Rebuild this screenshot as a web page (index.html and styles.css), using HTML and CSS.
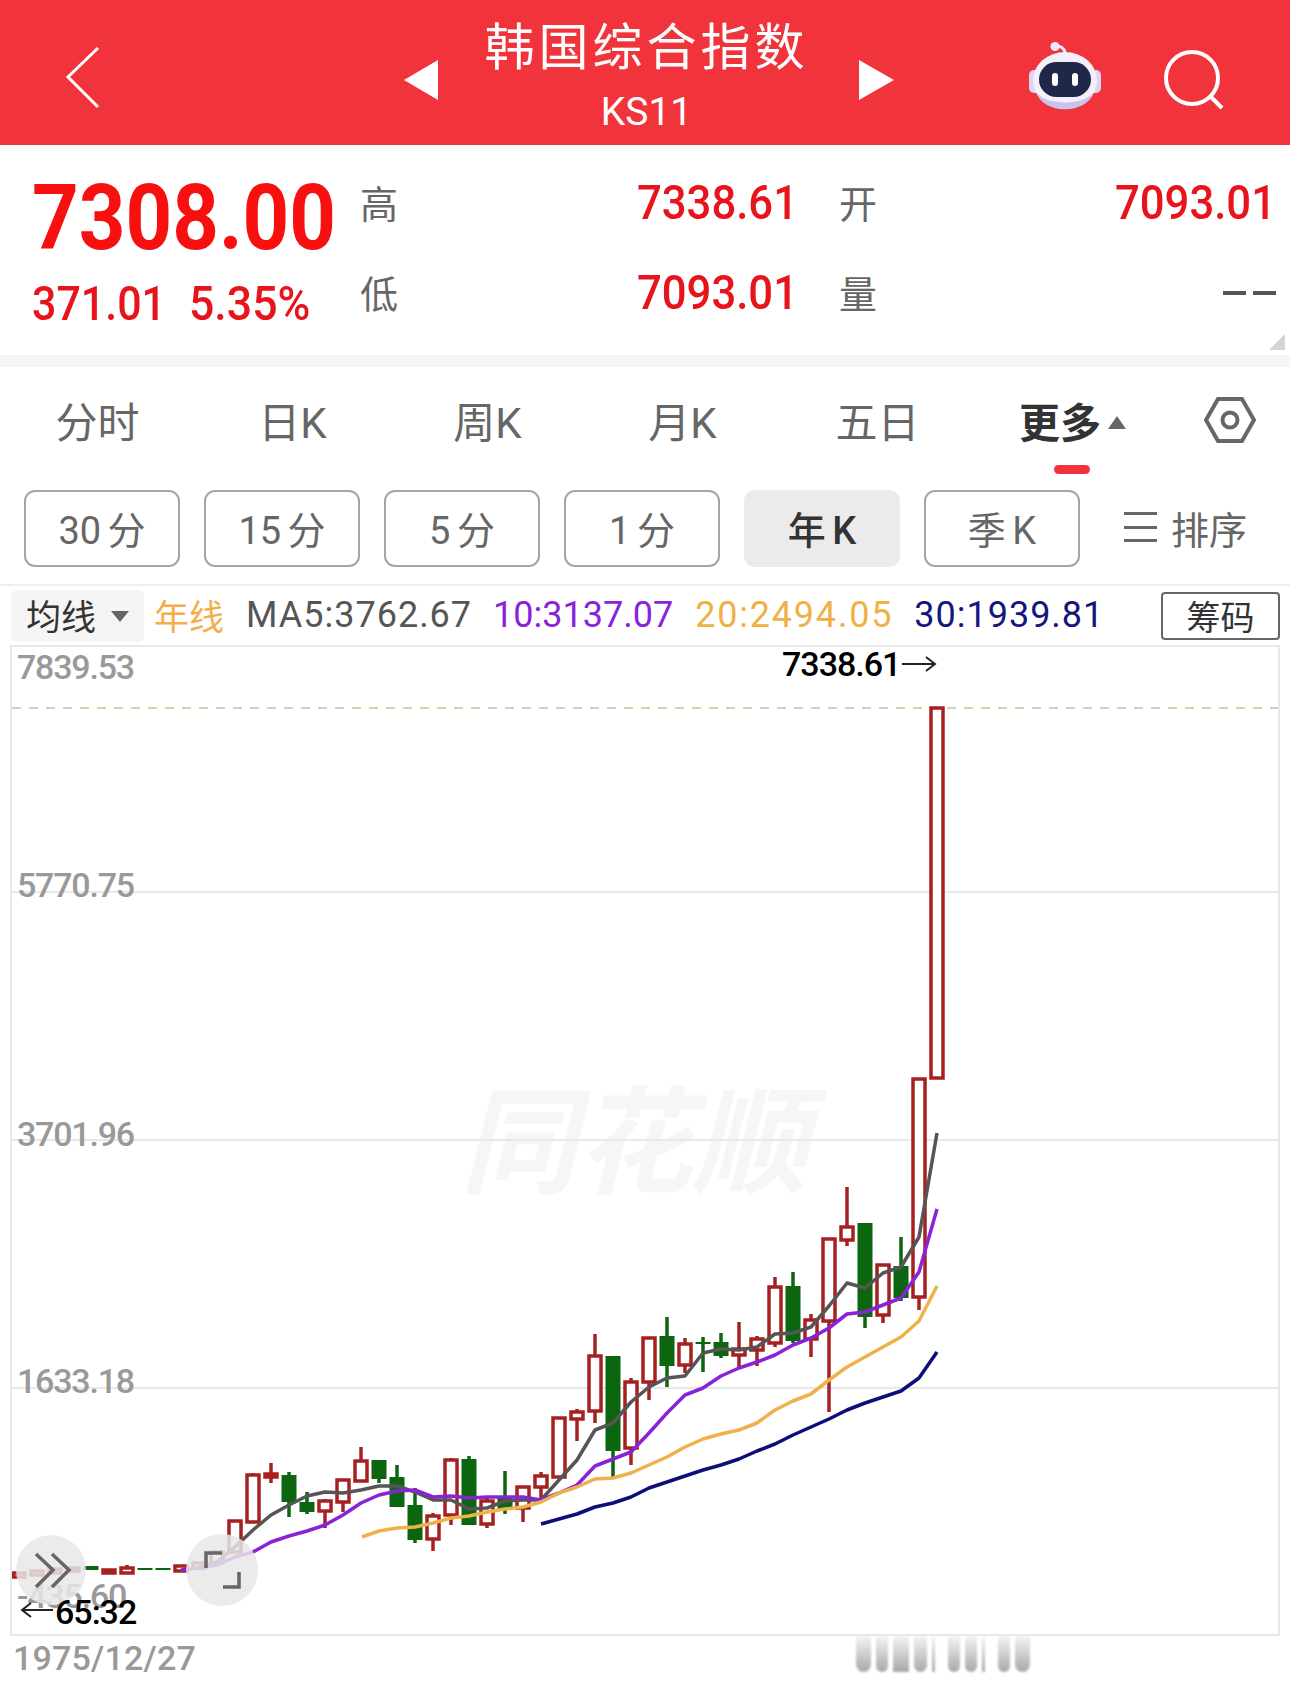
FILE: index.html
```html
<!DOCTYPE html>
<html lang="zh-CN">
<head>
    <meta charset="UTF-8">
    <meta name="viewport" content="width=device-width, initial-scale=1.0">
    <title>韩国综合指数</title>
    <link rel="stylesheet" href="styles.css">
</head>
<body>
    <header class="topbar">
        <div class="topbar-left">
            <svg class="back" width="36" height="64" viewBox="0 0 36 64"><polyline points="33,2 3,31 33,61"/></svg>
        </div>
        <div class="topbar-center">
            <span class="tri tri-left"></span>
            <div class="title">
                <div class="name">韩国综合指数</div>
                <div class="code">KS11</div>
            </div>
            <span class="tri tri-right"></span>
        </div>
        <div class="topbar-right">
            <svg class="robot" width="74" height="68" viewBox="0 0 74 68">
                <path class="antenna" d="M27 4.5c5-1 9 1 10 6"/>
                <circle cx="27" cy="4.5" r="4.5" fill="#eeeaf8"/>
                <rect x="1" y="28" width="12" height="23" rx="5" fill="#d9d5f2"/>
                <rect x="61" y="28" width="12" height="23" rx="5" fill="#d9d5f2"/>
                <ellipse cx="37" cy="38.5" rx="32" ry="28.5" fill="#f3f0fb"/>
                <path d="M8 50c7 23 51 23 58 0c-10 14-48 14-58 0z" fill="#c9c3ee"/>
                <rect x="11" y="20" width="52" height="35" rx="17.5" fill="#1f2848"/>
                <rect x="24" y="31" width="6" height="13" rx="3" fill="#fff"/>
                <rect x="44" y="31" width="6" height="13" rx="3" fill="#fff"/>
            </svg>
            <svg class="search" width="64" height="64" viewBox="0 0 64 64"><circle cx="30" cy="29" r="26"/><line x1="49" y1="48" x2="60" y2="59"/></svg>
        </div>
    </header>

    <section class="quote">
        <div class="price-block">
            <div class="price"><span class="squeeze">7308.00</span></div>
            <div class="change"><span class="squeeze">371.01</span><span class="squeeze change-pct">5.35%</span></div>
        </div>
        <div class="stat-grid">
            <span class="stat-label">高</span>
            <span class="stat-value"><span class="squeeze-r">7338.61</span></span>
            <span class="stat-label stat-label-b">开</span>
            <span class="stat-value"><span class="squeeze-r">7093.01</span></span>
            <span class="stat-label">低</span>
            <span class="stat-value"><span class="squeeze-r">7093.01</span></span>
            <span class="stat-label stat-label-b">量</span>
            <span class="stat-value stat-empty"><i></i><i></i></span>
        </div>
    </section>

    <nav class="tabs">
        <span class="tab">分时</span>
        <span class="tab">日K</span>
        <span class="tab">周K</span>
        <span class="tab">月K</span>
        <span class="tab">五日</span>
        <span class="tab tab-active">更多<i class="caret"></i></span>
        <span class="tab-settings">
            <svg width="52" height="48" viewBox="0 0 52 48"><polygon points="14,3 38,3 50,24 38,45 14,45 2,24"/><circle cx="26" cy="24" r="7.5"/></svg>
        </span>
    </nav>

    <div class="periods">
        <span class="period">30 分</span>
        <span class="period">15 分</span>
        <span class="period">5 分</span>
        <span class="period">1 分</span>
        <span class="period period-active">年 K</span>
        <span class="period">季 K</span>
        <span class="sort"><i class="sort-icon"></i>排序</span>
    </div>

    <div class="ma-row">
        <span class="ma-select">均线<i class="ma-caret"></i></span>
        <span class="ma-year">年线</span>
        <span class="ma ma5">MA5:3762.67</span>
        <span class="ma ma10">10:3137.07</span>
        <span class="ma ma20">20:2494.05</span>
        <span class="ma ma30">30:1939.81</span>
        <span class="chip-btn">筹码</span>
    </div>

    <div class="chart">
        <svg id="kline" viewBox="12 647 1266 987" width="1266" height="987"></svg>
    </div>

    <footer class="date-row">
        <span class="date">1975/12/27</span>
        <div class="blur-bars">
            <i class="bar w15"></i><i class="bar w12"></i><i class="bar w16 flat"></i><i class="bar w13"></i><i class="bar thin"></i>
            <i class="bar w12 gap-l"></i><i class="bar w12"></i><i class="bar thin"></i><i class="bar w12 gap-l"></i><i class="bar w15"></i>
        </div>
    </footer>

    <script src="chart.js"></script>
</body>
</html>
```

FILE: styles.css
```css
* {
    box-sizing: border-box;
}
body {
    margin: 0;
    width: 1290px;
    height: 1683px;
    overflow: hidden;
    background: #fff;
    font-family: Roboto, "Noto Sans CJK SC", sans-serif;
}
i {
    font-style: normal;
}

/* top bar */
.topbar {
    height: 145px;
    background: #f1333c;
    display: grid;
    grid-template-columns: 1fr auto 1fr;
    align-items: center;
    color: #fff;
}
.topbar-left {
    padding: 14px 0 0 65px;
}
.back polyline {
    fill: none;
    stroke: #fff;
    stroke-width: 3;
}
.topbar-center {
    display: flex;
    align-items: center;
    padding-left: 7px;
}
.tri {
    width: 0;
    height: 0;
    border-top: 20px solid transparent;
    border-bottom: 20px solid transparent;
    margin-top: 14px;
}
.tri-left {
    border-right: 34px solid #fff;
    margin-right: 47px;
}
.tri-right {
    border-left: 35px solid #fff;
    margin-left: 50px;
}
.title {
    text-align: center;
}
.name {
    font-size: 50px;
    line-height: 62px;
    letter-spacing: 4px;
    margin-top: 7px;
}
.code {
    font-size: 39px;
    line-height: 46px;
    margin-top: 10px;
}
.topbar-right {
    display: flex;
    justify-content: flex-end;
    align-items: center;
    padding: 12px 64px 0 0;
    gap: 60px;
}
.robot {
    margin-top: -5px;
}
.antenna {
    fill: none;
    stroke: #eeeaf8;
    stroke-width: 3;
}
.search {
    margin-top: 4px;
}
.search circle,
.search line {
    fill: none;
    stroke: #fff;
    stroke-width: 4;
}

/* quote */
.quote {
    position: relative;
    height: 222px;
    border-bottom: 12px solid #f5f5f5;
    display: flex;
}
.quote::after {
    content: "";
    position: absolute;
    right: 5px;
    bottom: 5px;
    width: 16px;
    height: 16px;
    background: #d4d4d4;
    clip-path: polygon(100% 0, 100% 100%, 0 100%);
}
.price-block {
    width: 360px;
    padding-left: 32px;
    color: #f80f0f;
}
.price {
    font-size: 90px;
    font-weight: 700;
    line-height: 92px;
    margin-top: 28px;
    white-space: nowrap;
}
.squeeze {
    display: inline-block;
    transform: scaleX(.905);
    transform-origin: left center;
}
.squeeze-r {
    display: inline-block;
    transform: scaleX(.91);
    transform-origin: right center;
}
.change {
    font-size: 48px;
    font-weight: 500;
    line-height: 54px;
    margin-top: 12px;
    white-space: nowrap;
    color: #e8141c;
}
.change .squeeze {
    width: 157px;
    transform: scaleX(.895);
}
.change .change-pct {
    width: auto;
    transform: scaleX(.93);
}
.stat-grid {
    flex: 1;
    display: grid;
    grid-template-columns: 40px 398px 41px 40px 397px;
    grid-template-rows: 90px 90px;
    padding-top: 11px;
    align-items: center;
}
.stat-label {
    font-size: 38px;
    color: #666;
}
.stat-label-b {
    grid-column: 4;
}
.stat-value {
    font-size: 48px;
    font-weight: 500;
    color: #e8141c;
    text-align: right;
    padding-top: 3px;
}
.stat-empty {
    display: flex;
    justify-content: flex-end;
    gap: 7px;
    padding-top: 0;
    margin-top: 3px;
}
.stat-empty i {
    width: 23px;
    height: 4px;
    background: #555;
}

/* tabs */
.tabs {
    height: 105px;
    display: flex;
    align-items: center;
}
.tab {
    flex: none;
    width: 195px;
    text-align: center;
    font-size: 42px;
    color: #666;
    position: relative;
}
.tab-active {
    color: #333;
    font-size: 41px;
    font-weight: 700;
}
.tab-active::after {
    content: "";
    position: absolute;
    left: 79px;
    top: 75px;
    width: 36px;
    height: 9px;
    border-radius: 5px;
    background: #f2333d;
}
.caret {
    display: inline-block;
    width: 0;
    height: 0;
    margin-left: 7px;
    vertical-align: 9px;
    border-left: 9px solid transparent;
    border-right: 9px solid transparent;
    border-bottom: 13px solid #666;
}
.tab-settings {
    flex: none;
    padding-left: 34px;
    display: flex;
}
.tab-settings polygon,
.tab-settings circle {
    fill: none;
    stroke: #666;
    stroke-width: 4;
}

/* period buttons */
.periods {
    height: 112px;
    display: flex;
    gap: 24px;
    padding: 18px 0 0 24px;
    align-items: flex-start;
}
.period {
    width: 156px;
    height: 77px;
    border: 2px solid #a5a5a5;
    border-radius: 11px;
    display: flex;
    align-items: center;
    justify-content: center;
    font-size: 38px;
    color: #666;
    word-spacing: -3px;
    padding-bottom: 3px;
}
.period-active {
    background: #ebebeb;
    border-color: #ebebeb;
    color: #333;
    font-weight: 500;
}
.sort {
    display: flex;
    align-items: center;
    height: 77px;
    font-size: 38px;
    color: #666;
    margin-left: 20px;
    padding-bottom: 3px;
}
.sort-icon {
    width: 33px;
    height: 30px;
    margin-right: 14px;
    border-top: 3px solid #666;
    border-bottom: 3px solid #666;
    background: linear-gradient(#666, #666) center / 100% 3px no-repeat;
}

/* moving average row */
.ma-row {
    height: 61px;
    border-top: 2px solid #eee;
    display: flex;
    align-items: center;
    font-size: 36px;
    white-space: nowrap;
    padding-left: 11px;
}
.ma-select {
    width: 133px;
    height: 52px;
    background: #f5f5f5;
    border-radius: 6px;
    display: flex;
    align-items: center;
    padding-left: 15px;
    padding-bottom: 3px;
    color: #333;
    font-size: 35px;
}
.ma-caret {
    width: 0;
    height: 0;
    margin-left: 15px;
    margin-top: 4px;
    border-left: 9px solid transparent;
    border-right: 9px solid transparent;
    border-top: 11px solid #666;
}
.ma-year {
    color: #f5ad4a;
    margin-left: 10px;
    font-size: 35px;
    padding-bottom: 3px;
}
.ma {
    padding-bottom: 1px;
}
.ma5 {
    color: #555;
    letter-spacing: 1px;
    margin-left: 22px;
}
.ma10 {
    color: #8a22d8;
    margin-left: 21px;
}
.ma20 {
    color: #efb143;
    letter-spacing: 1.8px;
    margin-left: 22px;
}
.ma30 {
    color: #15157e;
    letter-spacing: 1px;
    margin-left: 21px;
}
.chip-btn {
    margin-left: auto;
    margin-right: 10px;
    width: 119px;
    height: 48px;
    border: 2px solid #666;
    border-radius: 4px;
    display: flex;
    align-items: center;
    justify-content: center;
    color: #333;
    background: #fff;
    font-size: 34px;
}

/* chart */
.chart {
    height: 991px;
    width: 1270px;
    margin-left: 10px;
    border: 2px solid #e8e8e8;
}
#kline {
    display: block;
}
.grid-line {
    stroke: #e8e8e8;
    stroke-width: 2;
}
.top-line {
    stroke: #d4bf95;
    stroke-width: 1.5;
    stroke-dasharray: 9 8;
}
.watermark {
    font-size: 116px;
    font-weight: 700;
    font-style: italic;
    fill: #f6f6f6;
    font-family: "Noto Sans CJK SC", sans-serif;
}
.up-wick, .up-body {
    stroke: #a52020;
    stroke-width: 3.5;
    fill: #fff;
}
.down-wick {
    stroke: #0b660f;
    stroke-width: 3.5;
}
.down-body {
    fill: #0b660f;
}
.ma-line {
    fill: none;
    stroke-width: 3.5;
    stroke-linejoin: round;
}
.axis-label {
    font-size: 34px;
    font-weight: 500;
    letter-spacing: -1.2px;
    fill: #999;
}
.mark-label {
    font-size: 34px;
    font-weight: 500;
    letter-spacing: -1px;
    fill: #000;
}
.mark-arrow {
    fill: none;
    stroke: #222;
    stroke-width: 2;
}
.round-btn {
    fill: rgba(232, 232, 232, .85);
}
.round-icon {
    fill: none;
    stroke: #666;
    stroke-width: 3.5;
}

/* bottom */
.date-row {
    display: flex;
    height: 47px;
    padding-left: 13px;
}
.date {
    font-size: 34px;
    font-weight: 500;
    color: #999;
    line-height: 44px;
    letter-spacing: .2px;
}
.blur-bars {
    display: flex;
    gap: 5px;
    margin-left: 660px;
    height: 36px;
    filter: blur(1px);
}
.bar {
    display: block;
    background: linear-gradient(#f4f4f4, #a8a8a8);
    border-radius: 0 0 8px 8px;
}
.w12 { width: 12px; }
.w13 { width: 13px; }
.w15 { width: 15px; }
.w16 { width: 16px; }
.flat { border-radius: 0; }
.thin { width: 3px; }
.gap-l { margin-left: 8px; }
```

FILE: chart.js
```js
// svg uses page coordinates through its viewBox
const svg = document.getElementById('kline');
const NS = 'http://www.w3.org/2000/svg';

function add(tag, attrs, text) {
    const el = document.createElementNS(NS, tag);
    for (const k in attrs) el.setAttribute(k, attrs[k]);
    if (text) el.textContent = text;
    svg.appendChild(el);
    return el;
}

// x starts at 19, step 18: [type, bodyTop, bodyBottom, wickTop, wickBottom]
const candles = [
    ['r', 1573, 1577], ['r', 1571, 1575], ['r', 1569, 1573], ['r', 1568, 1571],
    ['g', 1566, 1570], ['r', 1570, 1573], ['r', 1568, 1573, 1565], ['g', 1568, 1570],
    ['g', 1568, 1570], ['r', 1566, 1571], ['r', 1563, 1568], ['r', 1552, 1563],
    ['r', 1521, 1552], ['r', 1475, 1522, 1473], ['r', 1474, 1477, 1463, 1483], ['g', 1475, 1502, 1472, 1517],
    ['g', 1502, 1512, 1492, 1514], ['r', 1501, 1511, 1499, 1528], ['r', 1480, 1502, 1480, 1512], ['r', 1461, 1481, 1447],
    ['g', 1460, 1479, 1460, 1483], ['g', 1477, 1507, 1465], ['g', 1505, 1540, 1488, 1543], ['r', 1516, 1539, 1513, 1551],
    ['r', 1460, 1515, 1458, 1525], ['g', 1459, 1525, 1456], ['r', 1501, 1524, 1498, 1528], ['g', 1498, 1509, 1471, 1514],
    ['r', 1487, 1508, 1487, 1522], ['r', 1476, 1487, 1472, 1500], ['r', 1418, 1477], ['r', 1412, 1419, 1409, 1441],
    ['r', 1356, 1411, 1334, 1423], ['g', 1356, 1451, 1356, 1477], ['r', 1382, 1448, 1378, 1465], ['r', 1338, 1382, 1338, 1400],
    ['g', 1336, 1366, 1317, 1387], ['r', 1344, 1365, 1338, 1373], ['g', 1342, 1344, 1337, 1372], ['g', 1342, 1356, 1333, 1358],
    ['r', 1349, 1355, 1322, 1368], ['r', 1339, 1350, 1336, 1366], ['r', 1287, 1343, 1277, 1347], ['g', 1286, 1341, 1272, 1343],
    ['r', 1320, 1339, 1314, 1357], ['r', 1239, 1321, 1239, 1412], ['r', 1227, 1240, 1187, 1246], ['g', 1223, 1317, 1223, 1328],
    ['r', 1265, 1315, 1265, 1323], ['g', 1266, 1298, 1237, 1301], ['r', 1079, 1297, 1079, 1310], ['r', 708, 1078]
];

const ma5 = '199,1567 217,1562 235,1547 253,1530 271,1515 289,1505 307,1496 325,1492 343,1493 361,1490 379,1486 397,1486 415,1492 433,1500 451,1500 469,1509 487,1508 505,1501 523,1500 541,1500 559,1480 577,1460 595,1430 613,1423 631,1402 649,1387 667,1378 685,1376 703,1353 721,1349 739,1350 757,1347 775,1334 793,1333 811,1327 829,1306 847,1283 865,1288 883,1273 901,1267 919,1237 937,1133';
const ma10 = '181,1570 199,1568 217,1565 235,1557 253,1552 271,1542 289,1536 307,1531 325,1525 343,1515 361,1503 379,1495 397,1491 415,1490 433,1497 451,1496 469,1498 487,1497 505,1497 523,1497 541,1500 559,1493 577,1485 595,1466 613,1459 631,1452 649,1433 667,1413 685,1395 703,1388 721,1376 739,1368 757,1362 775,1355 793,1345 811,1338 829,1328 847,1314 865,1312 883,1305 901,1298 919,1272 937,1209';
const ma20 = '362,1537 379,1531 397,1528 415,1527 433,1523 451,1518 469,1516 487,1512 505,1509 523,1507 541,1502 559,1493 577,1487 595,1479 613,1478 631,1473 649,1465 667,1457 685,1447 703,1439 721,1434 739,1430 757,1423 775,1410 793,1401 811,1394 829,1380 847,1367 865,1357 883,1347 901,1337 919,1321 937,1286';
const ma30 = '541,1524 559,1519 577,1514 595,1507 613,1503 631,1497 649,1488 667,1482 685,1476 703,1470 721,1465 739,1459 757,1451 775,1444 793,1435 811,1427 829,1419 847,1410 865,1403 883,1397 901,1391 919,1378 937,1352';

add('text', { x: 460, y: 1184, class: 'watermark' }, '同花顺');

[892, 1140, 1388].forEach(y => add('line', { x1: 12, x2: 1278, y1: y, y2: y, class: 'grid-line' }));
add('line', { x1: 12, x2: 1278, y1: 708, y2: 708, class: 'top-line' });

candles.forEach((c, i) => {
    const x = 19 + i * 18;
    const top = c[1], bottom = c[2];
    const wickTop = c[3] || top, wickBottom = c[4] || bottom;
    if (c[0] === 'r') {
        add('line', { x1: x, x2: x, y1: wickTop, y2: wickBottom, class: 'up-wick' });
        add('rect', { x: x - 6, y: top, width: 12, height: bottom - top, class: 'up-body' });
    } else {
        add('line', { x1: x, x2: x, y1: wickTop, y2: wickBottom, class: 'down-wick' });
        add('rect', { x: x - 7.5, y: top, width: 15, height: bottom - top, class: 'down-body' });
    }
});

[[ma5, '#555'], [ma10, '#8a22d8'], [ma20, '#eeb24a'], [ma30, '#0e0e78']].forEach(m => {
    add('polyline', { points: m[0], stroke: m[1], class: 'ma-line' });
});

[['7839.53', 679], ['5770.75', 897], ['3701.96', 1146], ['1633.18', 1393], ['-435.60', 1608]].forEach(l => {
    add('text', { x: 17, y: l[1], class: 'axis-label' }, l[0]);
});

// round buttons over the chart
add('circle', { cx: 51, cy: 1570, r: 35, class: 'round-btn' });
add('circle', { cx: 222, cy: 1570, r: 36, class: 'round-btn' });
add('path', { d: 'M36 1554l17 16l-17 17M52 1554l17 16l-17 17', class: 'round-icon' });
add('path', { d: 'M206 1568v-15h16M239 1572v15h-16', class: 'round-icon' });

add('text', { x: 782, y: 676, class: 'mark-label' }, '7338.61');
add('path', { d: 'M902 664h33m-9-7l9 7l-9 7', class: 'mark-arrow' });
add('text', { x: 55, y: 1624, class: 'mark-label' }, '65:32');
add('path', { d: 'M53 1610h-31m9-7l-9 7l9 7', class: 'mark-arrow' });
```
